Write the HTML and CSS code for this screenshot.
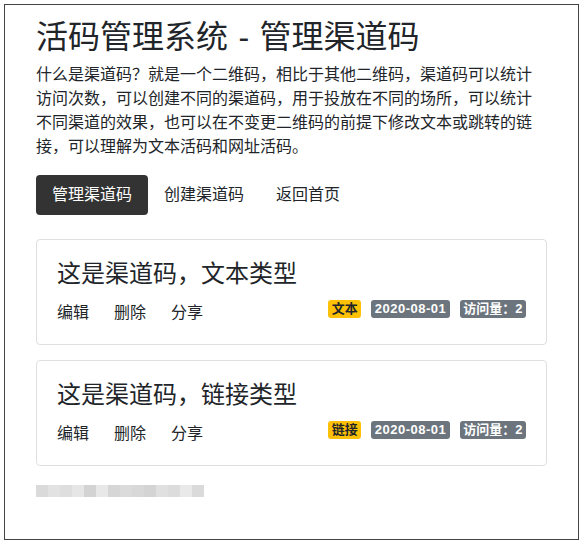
FILE: index.html
```html
<!DOCTYPE html>
<html lang="zh-CN">
<head>
<meta charset="utf-8">
<title>活码管理系统 - 管理渠道码</title>
<link rel="stylesheet" href="styles.css">
</head>
<body>
<div class="frame">
  <h1 class="title">活码管理系统 - 管理渠道码</h1>
  <p class="intro">什么是渠道码？就是一个二维码，相比于其他二维码，渠道码可以统计访问次数，可以创建不同的渠道码，用于投放在不同的场所，可以统计不同渠道的效果，也可以在不变更二维码的前提下修改文本或跳转的链接，可以理解为文本活码和网址活码。</p>
  <nav class="nav">
    <a class="nav-link active" href="#">管理渠道码</a>
    <a class="nav-link" href="#">创建渠道码</a>
    <a class="nav-link" href="#">返回首页</a>
  </nav>
  <div class="cards">
    <div class="card">
      <div class="card-title">这是渠道码，文本类型</div>
      <div class="card-row">
        <div class="actions">
          <a href="#">编辑</a>
          <a href="#">删除</a>
          <a href="#">分享</a>
        </div>
        <div class="badges">
          <span class="badge badge-warn">文本</span>
          <span class="badge badge-gray badge-date">2020-08-01</span>
          <span class="badge badge-gray">访问量：2</span>
        </div>
      </div>
    </div>
    <div class="card">
      <div class="card-title">这是渠道码，链接类型</div>
      <div class="card-row">
        <div class="actions">
          <a href="#">编辑</a>
          <a href="#">删除</a>
          <a href="#">分享</a>
        </div>
        <div class="badges">
          <span class="badge badge-warn">链接</span>
          <span class="badge badge-gray badge-date">2020-08-01</span>
          <span class="badge badge-gray">访问量：2</span>
        </div>
      </div>
    </div>
  </div>
  <div class="footer-blur">
    <span class="px p1"></span><span class="px p2"></span><span class="px p3"></span><span class="px p4"></span><span class="px p5"></span><span class="px p6"></span><span class="px p7"></span><span class="px p8"></span><span class="px p9"></span><span class="px p10"></span><span class="px p11"></span><span class="px p12"></span><span class="px p13"></span><span class="px p14"></span>
  </div>
</div>
</body>
</html>
```

FILE: styles.css
```css
html, body {
  margin: 0;
  padding: 0;
  background: #fff;
}

body {
  font-family: "Liberation Sans", "Noto Sans CJK SC", sans-serif;
  color: #212529;
  font-size: 16px;
}

.frame {
  box-sizing: border-box;
  margin: 4px 2px 2px 4px;
  height: 536px;
  border: 1px solid #444;
  padding: 13px 31px 0;
}

.title {
  margin: 0;
  font-size: 32px;
  line-height: 38px;
  font-weight: 400;
  word-spacing: 1.5px;
  color: #212529;
}

.intro {
  margin: 7px 0 0;
  max-width: 505px;
  font-size: 16px;
  line-height: 24px;
}

.nav {
  display: flex;
  margin-top: 16px;
}

.nav-link {
  display: block;
  padding: 8px 16px;
  line-height: 24px;
  font-size: 16px;
  color: #212529;
  text-decoration: none;
  border-radius: 4px;
}

.nav-link.active {
  background: #333;
  color: #fff;
}

.cards {
  margin-top: 24px;
  display: flex;
  flex-direction: column;
  gap: 15px;
}

.card {
  border: 1px solid #dfdfdf;
  border-radius: 4px;
  padding: 20px 20px 19px;
}

.card-title {
  font-size: 24px;
  line-height: 28px;
}

.card-row {
  margin-top: 13px;
  display: flex;
  justify-content: space-between;
  align-items: flex-start;
}

.actions {
  display: flex;
  gap: 25px;
  line-height: 24px;
  font-size: 16px;
}

.actions a {
  color: #212529;
  text-decoration: none;
}

.badges {
  display: flex;
  gap: 10px;
  margin-top: -1px;
}

.badge {
  display: block;
  height: 18px;
  line-height: 18px;
  padding: 0 3.5px;
  font-size: 13px;
  font-weight: 700;
  border-radius: 3px;
  white-space: nowrap;
}

.badge-warn {
  background: #ffc107;
  color: #212529;
}

.badge-gray {
  background: #6c757d;
  color: #fff;
}

.badge-date {
  letter-spacing: 0.5px;
}

.footer-blur {
  margin-top: 19px;
  display: flex;
  height: 12px;
}

.px {
  display: block;
  width: 12px;
  height: 12px;
}

.p1 { background: #dadada; }
.p2 { background: #e2e2e2; }
.p3 { background: #dedede; }
.p4 { background: #e6e6e6; }
.p5 { background: #d3d3d3; }
.p6 { background: #e8e8e8; }
.p7 { background: #d6d6d6; }
.p8 { background: #dbdbdb; }
.p9 { background: #d8d8d8; }
.p10 { background: #d4d4d4; }
.p11 { background: #e0e0e0; }
.p12 { background: #dcdcdc; }
.p13 { background: #e9e9e9; }
.p14 { background: #dadada; }
```
